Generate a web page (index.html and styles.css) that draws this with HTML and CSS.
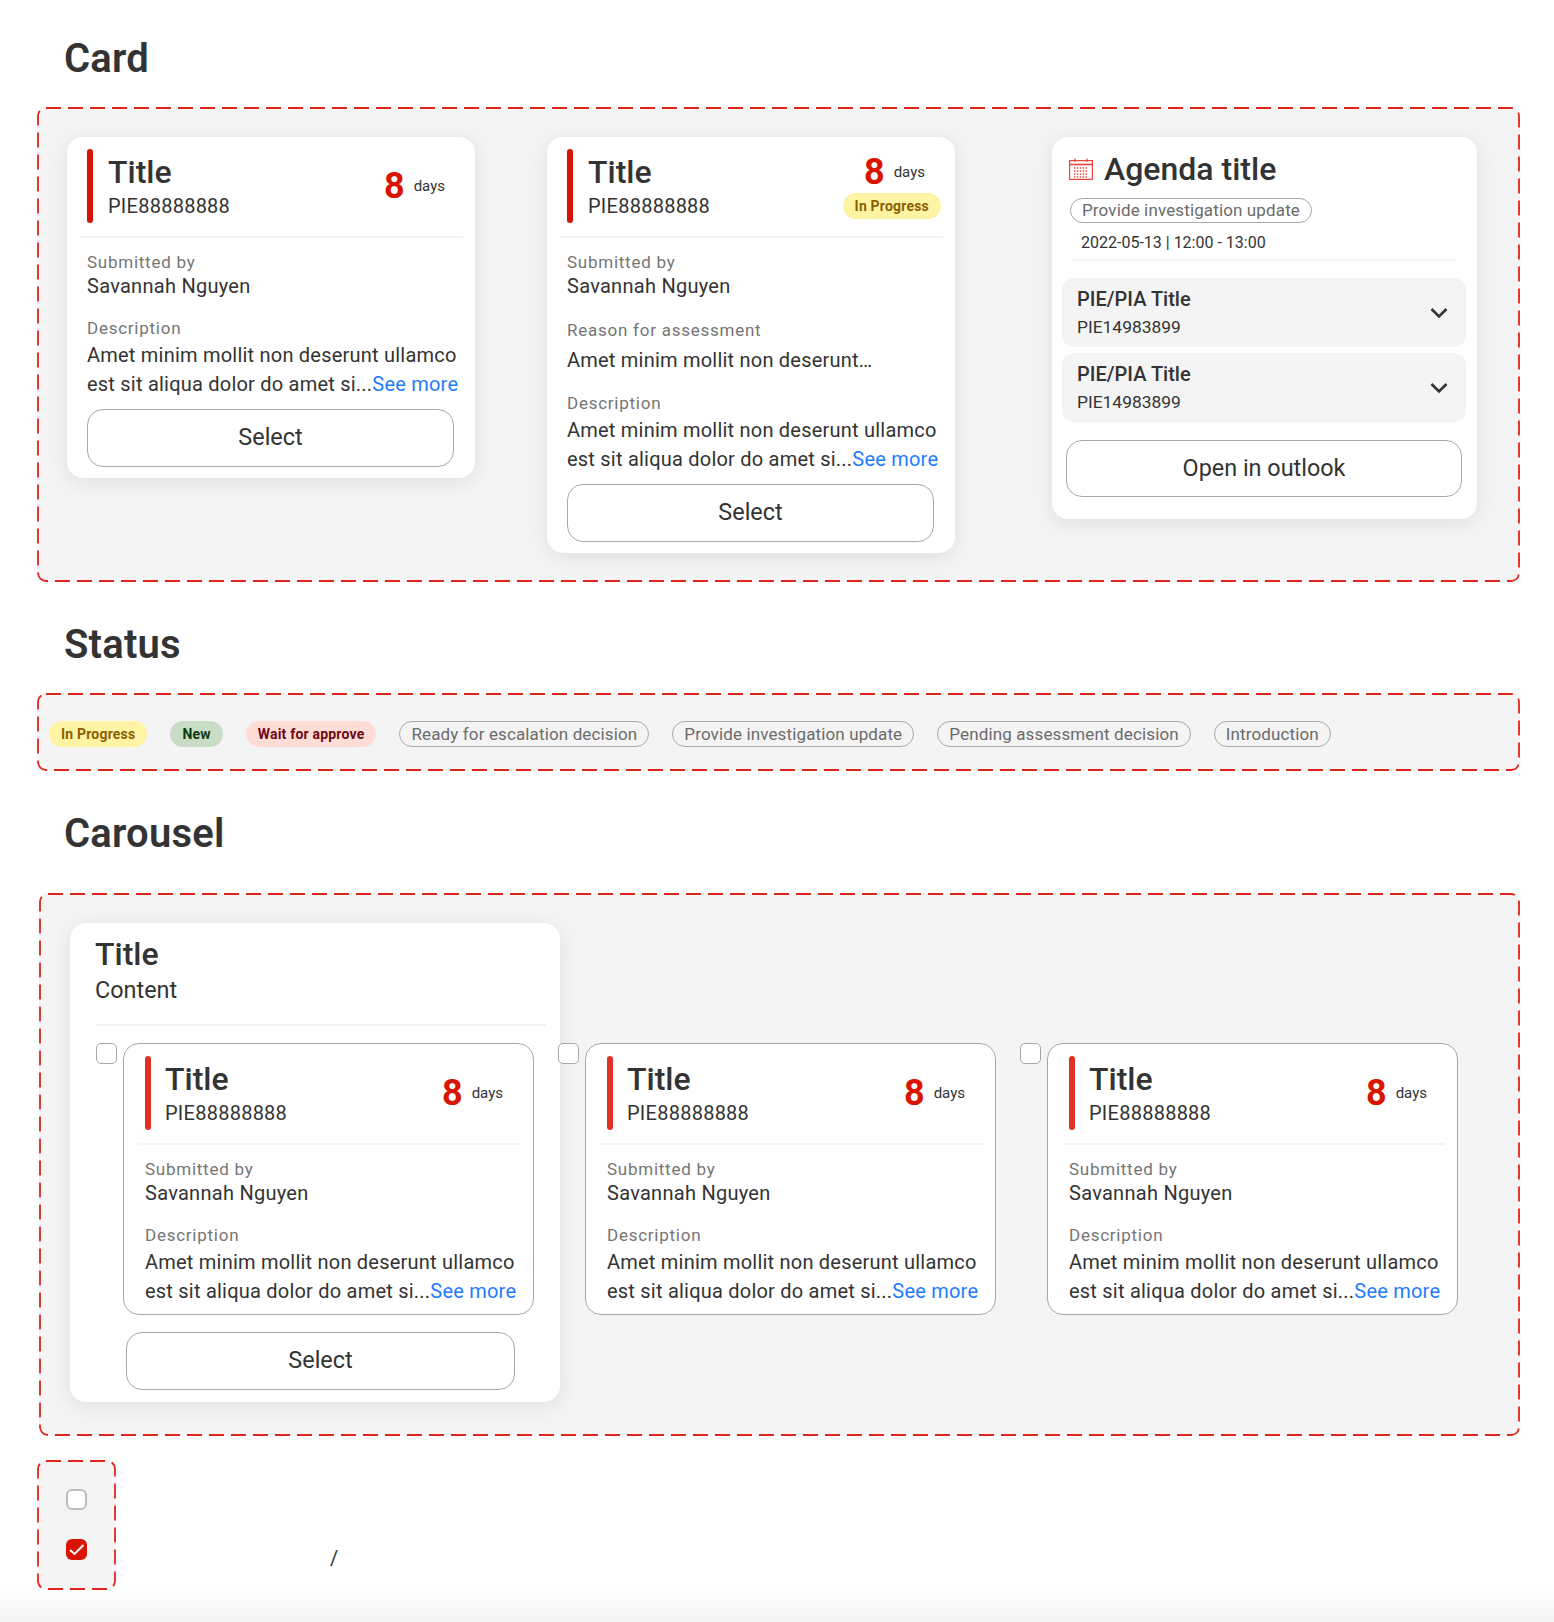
FILE: index.html
```html
<!DOCTYPE html>
<html lang="en">
<head>
    <meta charset="UTF-8">
    <meta name="viewport" content="width=device-width, initial-scale=1.0">
    <title>Components</title>
    <link rel="stylesheet" href="styles.css">
</head>
<body>
    <h1 class="heading">Card</h1>
    <section class="frame card-frame">
        <article class="ticket">
            <header class="ticket-head">
                <span class="ticket-bar"></span>
                <div class="ticket-name">
                    <div class="title">Title</div>
                    <div class="ticket-id">PIE88888888</div>
                </div>
                <div class="ticket-side">
                    <div class="count"><b>8</b><span>days</span></div>
                </div>
            </header>
            <div class="ticket-body">
                <div class="label">Submitted by</div>
                <div class="person">Savannah Nguyen</div>
                <div class="label label-gap">Description</div>
                <p class="text">Amet minim mollit non deserunt ullamco est sit aliqua dolor do amet si...<a href="#">See more</a></p>
                <button class="btn">Select</button>
            </div>
        </article>

        <article class="ticket">
            <header class="ticket-head">
                <span class="ticket-bar"></span>
                <div class="ticket-name">
                    <div class="title">Title</div>
                    <div class="ticket-id">PIE88888888</div>
                </div>
                <div class="ticket-side">
                    <div class="count"><b>8</b><span>days</span></div>
                    <span class="chip chip-yellow side-chip">In Progress</span>
                </div>
            </header>
            <div class="ticket-body">
                <div class="label">Submitted by</div>
                <div class="person">Savannah Nguyen</div>
                <div class="label label-reason">Reason for assessment</div>
                <p class="text text-reason">Amet minim mollit non deserunt…</p>
                <div class="label label-after">Description</div>
                <p class="text">Amet minim mollit non deserunt ullamco est sit aliqua dolor do amet si...<a href="#">See more</a></p>
                <button class="btn">Select</button>
            </div>
        </article>

        <article class="agenda">
            <div class="agenda-title">
                <svg class="cal" viewBox="0 0 24 22" width="24" height="22" fill="none" stroke="#e8433a">
                    <rect x="0.6" y="2.6" width="22.8" height="18.8" stroke-width="1.2"/>
                    <path d="M0.6 6.5h22.8" stroke-width="1.6"/>
                    <path d="M6 0.5v3.5M18 0.5v3.5" stroke-width="1.2"/>
                    <path d="M5 10h14M5 13h14M5 16h14M5 19h14" stroke-width="1.4" stroke-dasharray="1.4 1.5"/>
                </svg>
                <span class="title">Agenda title</span>
            </div>
            <span class="chip chip-line agenda-chip">Provide investigation update</span>
            <div class="agenda-date">2022-05-13 | 12:00 - 13:00</div>
            <div class="agenda-rule"></div>
            <div class="agenda-row">
                <div>
                    <div class="row-title">PIE/PIA Title</div>
                    <div class="row-id">PIE14983899</div>
                </div>
                <svg class="chev" viewBox="0 0 18 12" width="18" height="12" fill="none" stroke="#333" stroke-width="2.6"><path d="M1.5 2l7.5 7.5L16.5 2"/></svg>
            </div>
            <div class="agenda-row">
                <div>
                    <div class="row-title">PIE/PIA Title</div>
                    <div class="row-id">PIE14983899</div>
                </div>
                <svg class="chev" viewBox="0 0 18 12" width="18" height="12" fill="none" stroke="#333" stroke-width="2.6"><path d="M1.5 2l7.5 7.5L16.5 2"/></svg>
            </div>
            <button class="btn agenda-btn">Open in outlook</button>
        </article>
    </section>

    <h1 class="heading heading-next">Status</h1>
    <section class="frame status-frame">
        <span class="chip chip-yellow">In Progress</span>
        <span class="chip chip-green">New</span>
        <span class="chip chip-red">Wait for approve</span>
        <span class="chip chip-line">Ready for escalation decision</span>
        <span class="chip chip-line">Provide investigation update</span>
        <span class="chip chip-line">Pending assessment decision</span>
        <span class="chip chip-line">Introduction</span>
    </section>

    <h1 class="heading heading-next heading-carousel">Carousel</h1>
    <section class="frame carousel-frame">
        <div class="carousel">
            <div class="title">Title</div>
            <div class="carousel-sub">Content</div>
            <div class="carousel-rule"></div>
            <div class="track">
                <div class="slide">
                    <span class="box"></span>
                    <article class="ticket ticket-line">
                        <header class="ticket-head">
                            <span class="ticket-bar"></span>
                            <div class="ticket-name">
                                <div class="title">Title</div>
                                <div class="ticket-id">PIE88888888</div>
                            </div>
                            <div class="ticket-side">
                                <div class="count"><b>8</b><span>days</span></div>
                            </div>
                        </header>
                        <div class="ticket-body">
                            <div class="label">Submitted by</div>
                            <div class="person">Savannah Nguyen</div>
                            <div class="label label-gap">Description</div>
                            <p class="text">Amet minim mollit non deserunt ullamco est sit aliqua dolor do amet si...<a href="#">See more</a></p>
                        </div>
                    </article>
                </div>
                <div class="slide">
                    <span class="box"></span>
                    <article class="ticket ticket-line">
                        <header class="ticket-head">
                            <span class="ticket-bar"></span>
                            <div class="ticket-name">
                                <div class="title">Title</div>
                                <div class="ticket-id">PIE88888888</div>
                            </div>
                            <div class="ticket-side">
                                <div class="count"><b>8</b><span>days</span></div>
                            </div>
                        </header>
                        <div class="ticket-body">
                            <div class="label">Submitted by</div>
                            <div class="person">Savannah Nguyen</div>
                            <div class="label label-gap">Description</div>
                            <p class="text">Amet minim mollit non deserunt ullamco est sit aliqua dolor do amet si...<a href="#">See more</a></p>
                        </div>
                    </article>
                </div>
                <div class="slide">
                    <span class="box"></span>
                    <article class="ticket ticket-line">
                        <header class="ticket-head">
                            <span class="ticket-bar"></span>
                            <div class="ticket-name">
                                <div class="title">Title</div>
                                <div class="ticket-id">PIE88888888</div>
                            </div>
                            <div class="ticket-side">
                                <div class="count"><b>8</b><span>days</span></div>
                            </div>
                        </header>
                        <div class="ticket-body">
                            <div class="label">Submitted by</div>
                            <div class="person">Savannah Nguyen</div>
                            <div class="label label-gap">Description</div>
                            <p class="text">Amet minim mollit non deserunt ullamco est sit aliqua dolor do amet si...<a href="#">See more</a></p>
                        </div>
                    </article>
                </div>
            </div>
            <button class="btn carousel-btn">Select</button>
        </div>
    </section>

    <div class="checks-row">
        <section class="frame checks-frame">
            <span class="box"></span>
            <span class="box box-on">
                <svg viewBox="0 0 21 21" width="21" height="21" fill="none" stroke="#fff" stroke-width="2"><path d="M4 11l4.5 4L17.5 6"/></svg>
            </span>
        </section>
        <span class="slash">/</span>
    </div>
</body>
</html>
```

FILE: styles.css
```css
* {
    box-sizing: border-box;
}
body {
    margin: 0;
    padding: 35px 34px 0 37px;
    min-height: 1622px;
    font-family: Roboto, "Liberation Sans", sans-serif;
    color: #333;
    background: linear-gradient(to bottom, #fff 1585px, #f4f4f4 1622px);
}

.heading {
    margin: 0 0 25px 27px;
    font-size: 40px;
    line-height: 47px;
    font-weight: 600;
    letter-spacing: 0.2px;
}
.heading-next {
    margin-top: 39px;
}
.heading-carousel {
    margin-bottom: 36px;
}

.frame {
    border-radius: 8px;
    background-color: #f4f4f4;
    background-image: url("data:image/svg+xml,%3csvg width='100%25' height='100%25' xmlns='http://www.w3.org/2000/svg'%3e%3crect x='1' y='1' style='width:calc(100%25 - 2px);height:calc(100%25 - 2px)' fill='none' rx='8' ry='8' stroke='%23e0261c' stroke-width='1.8' stroke-dasharray='15 7'/%3e%3c/svg%3e");
}
.card-frame {
    display: flex;
    align-items: flex-start;
    gap: 72px;
    padding: 30px 0 29px 30px;
}
.status-frame {
    display: flex;
    gap: 23px;
    padding: 28px 0 24px 12px;
}
.carousel-frame {
    margin-left: 2px;
    padding: 30px 0 34px 31px;
}
.checks-frame {
    display: flex;
    flex-direction: column;
    gap: 29px;
    width: 79px;
    height: 130px;
    padding: 29px 0 0 29px;
}

/* shared bits */
.title {
    font-size: 32px;
    line-height: 38px;
    font-weight: 500;
}
.btn {
    display: block;
    width: 367px;
    height: 58px;
    margin: 10px 0 0;
    padding: 0 0 2px;
    border: 1px solid #a8a8a8;
    border-radius: 16px;
    background: #fff;
    font-family: inherit;
    font-size: 23.4px;
    color: #333;
}

.chip {
    display: inline-block;
    height: 26px;
    padding: 0 12px;
    border-radius: 13px;
    font-size: 14px;
    line-height: 26px;
    font-weight: 700;
    letter-spacing: 0.2px;
    white-space: nowrap;
}
.chip-yellow {
    background: #fff4a3;
    color: #8a6100;
}
.chip-green {
    background: #c8dcc6;
    color: #0d3b10;
}
.chip-red {
    background: #ffdcd6;
    color: #6b0a12;
}
.chip-line {
    padding: 0 11px;
    border: 1px solid #a8a8a8;
    font-size: 17px;
    line-height: 24px;
    font-weight: 400;
    letter-spacing: 0.13px;
    color: #6b6b6b;
}

/* ticket card */
.ticket {
    flex: none;
    width: 408px;
    padding: 12px 12px 11px 13px;
    border-radius: 16px;
    background: #fff;
    box-shadow: 0 4px 20px rgba(0, 0, 0, 0.09);
}
.ticket-line {
    width: 411px;
    padding: 12px 12px 8px 14px;
    border: 1px solid #a8a8a8;
    box-shadow: none;
}
.ticket-line .ticket-bar {
    background: #e03025;
}
.ticket-line .ticket-name {
    padding-left: 14px;
}
.ticket-head {
    display: flex;
    align-items: center;
    padding: 0 2px 13px 7px;
    border-bottom: 2px solid #f4f4f4;
}
.ticket-bar {
    flex: none;
    align-self: stretch;
    width: 6px;
    height: 74px;
    border-radius: 3px;
    background: #d91400;
}
.ticket-name {
    flex: 1;
    padding: 4px 0 5px 15px;
}
.ticket-id {
    margin-top: 3px;
    font-size: 20px;
    line-height: 24px;
    letter-spacing: 0.25px;
}
.ticket-side {
    display: flex;
    flex-direction: column;
    align-items: flex-end;
}
.side-chip {
    margin-top: 2px;
}
.count {
    display: flex;
    align-items: center;
    gap: 9px;
    height: 38px;
    margin-right: 16px;
    font-size: 15px;
}
.count b {
    font-size: 36px;
    color: #d91400;
}
.ticket-body {
    padding: 14px 0 0 7px;
}
.label {
    font-size: 17px;
    line-height: 21px;
    letter-spacing: 0.75px;
    color: #757575;
}
.label-gap {
    margin-top: 20px;
}
.label-reason {
    margin-top: 22px;
}
.label-after {
    margin-top: 18px;
}
.person {
    margin-top: 1px;
    font-size: 20px;
    line-height: 24px;
    letter-spacing: 0.27px;
}
.text {
    margin: 2px 0 0;
    font-size: 20px;
    line-height: 29px;
    letter-spacing: 0.22px;
}
.text-reason {
    margin-top: 5px;
}
.text a {
    color: #1f7cff;
    text-decoration: none;
}

/* agenda card */
.agenda {
    flex: none;
    width: 425px;
    margin-left: 25px;
    padding: 13px 11px 22px 10px;
    border-radius: 16px;
    background: #fff;
    box-shadow: 0 4px 20px rgba(0, 0, 0, 0.09);
}
.agenda-title {
    display: flex;
    align-items: center;
    gap: 11px;
    padding-left: 7px;
}
.agenda-chip {
    display: block;
    width: max-content;
    margin: 10px 0 0 8px;
    height: 25px;
    line-height: 23px;
}
.agenda-date {
    margin: 10px 0 0 19px;
    font-size: 16px;
    line-height: 19px;
}
.agenda-rule {
    height: 2px;
    margin: 7px 10px 17px;
    background: #f4f4f4;
}
.agenda-row {
    display: flex;
    justify-content: space-between;
    align-items: center;
    height: 69px;
    margin-bottom: 6px;
    padding: 9px 18px 10px 15px;
    border-radius: 12px;
    background: #f4f4f4;
}
.chev {
    margin-top: 2px;
}
.row-title {
    font-size: 20px;
    line-height: 24px;
    font-weight: 500;
}
.row-id {
    margin-top: 6px;
    font-size: 17.4px;
    line-height: 21px;
}
.agenda-btn {
    width: 396px;
    height: 57px;
    margin: 18px 0 0 4px;
}

/* carousel */
.carousel {
    width: 490px;
    height: 479px;
    padding: 12px 14px 0 25px;
    border-radius: 16px;
    background: #fff;
    box-shadow: 0 4px 20px rgba(0, 0, 0, 0.09);
}
.carousel-sub {
    margin-top: 3px;
    font-size: 23.4px;
    line-height: 28px;
}
.carousel-rule {
    height: 2px;
    margin: 20px 0 17px;
    background: #f4f4f4;
}
.track {
    display: flex;
    gap: 24px;
    width: max-content;
    margin-left: 1px;
}
.slide {
    display: flex;
    align-items: flex-start;
    gap: 6px;
}
.box {
    display: block;
    flex: none;
    width: 21px;
    height: 21px;
    border: 1px solid #a8a8a8;
    border-radius: 5px;
    background: #fff;
}
.checks-frame .box {
    border: 2px solid #bdbdbd;
    border-radius: 6px;
}
.checks-frame .box-on {
    border: 0;
    background: #d91400;
}
.box-on svg {
    display: block;
}
.carousel-btn {
    width: 389px;
    margin: 17px 0 0 31px;
}

.checks-row {
    display: flex;
    align-items: flex-end;
    margin-top: 24px;
}
.slash {
    margin: 0 0 20px 214px;
    font-size: 20px;
    line-height: 24px;
}
```
